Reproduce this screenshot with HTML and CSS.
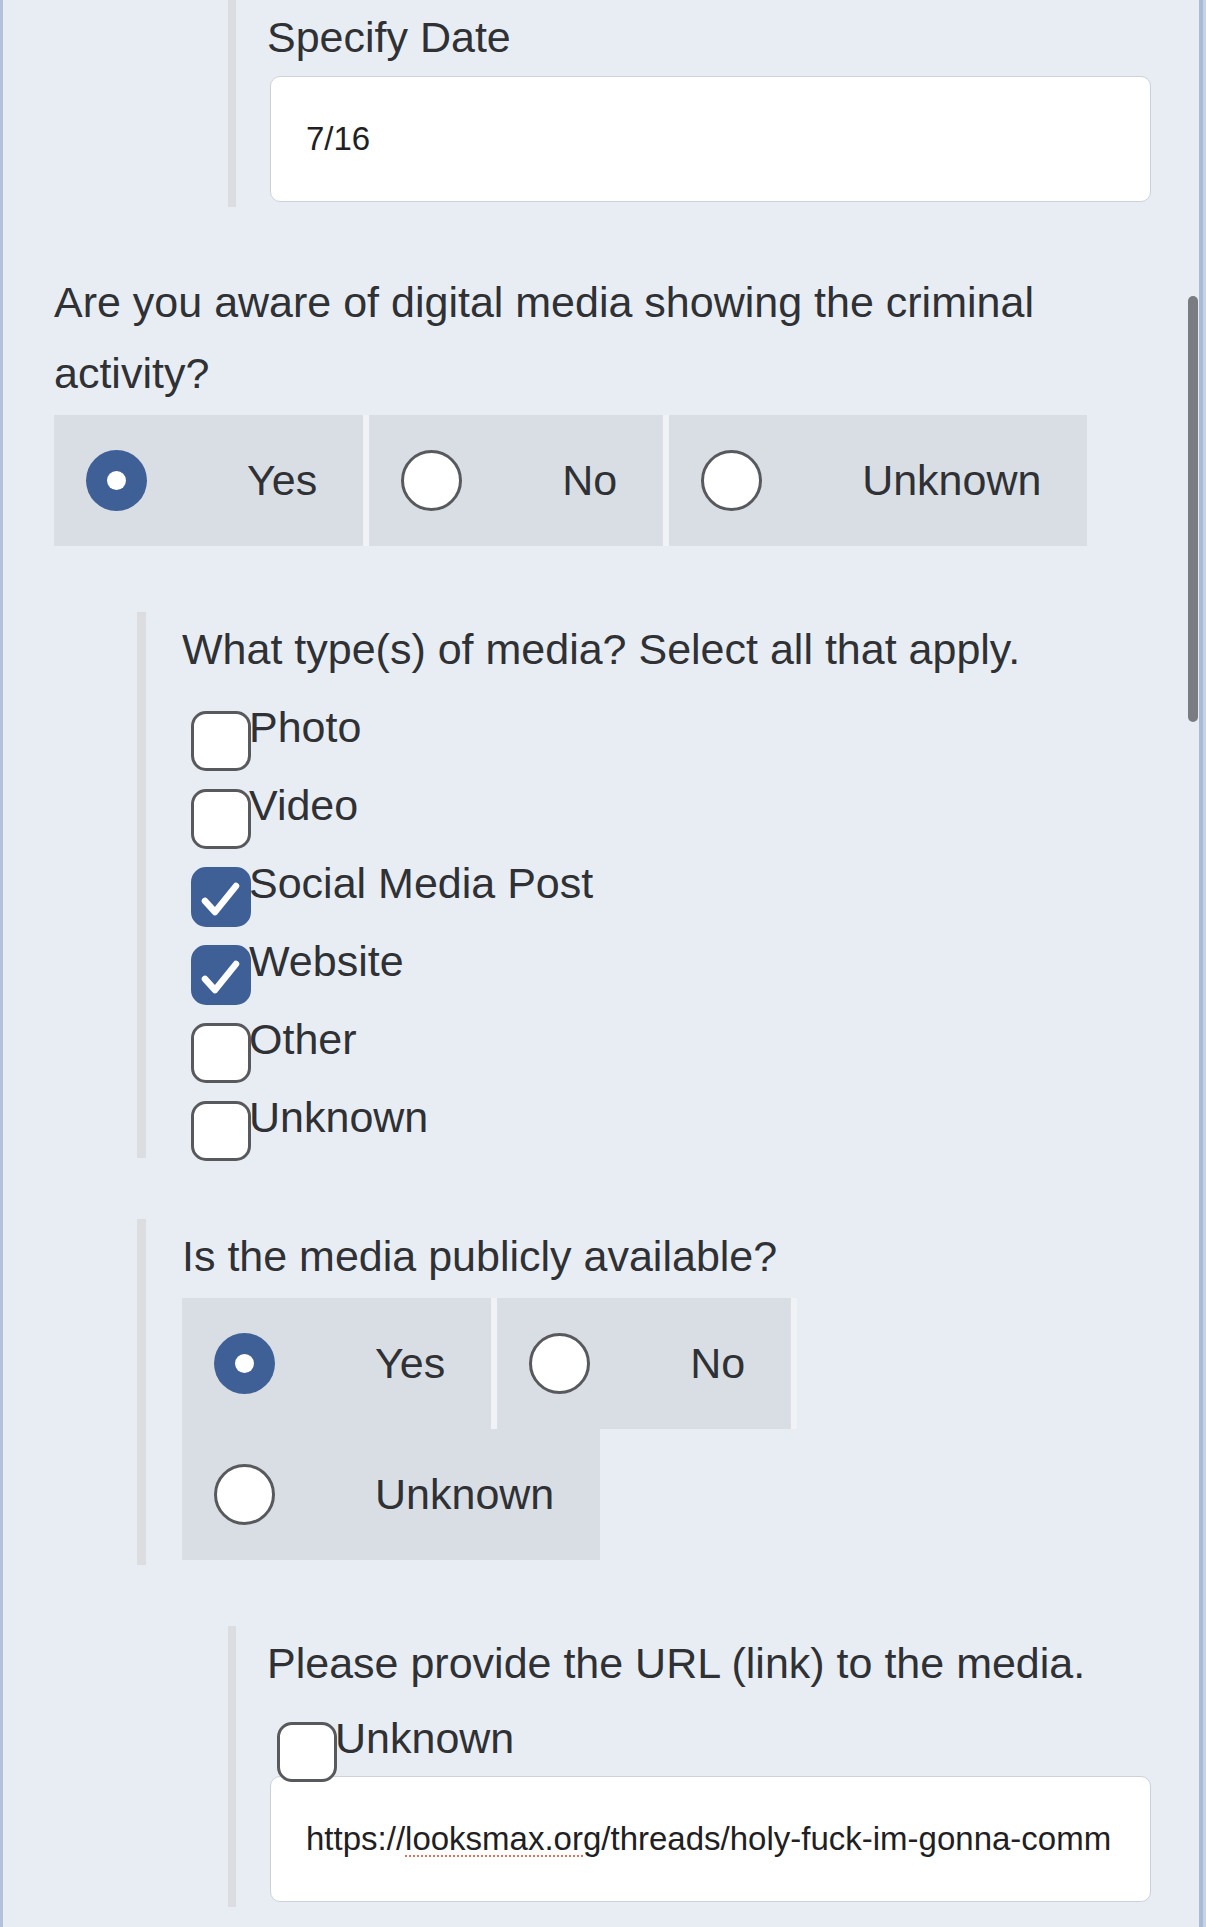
FILE: index.html
```html
<!DOCTYPE html>
<html lang="en">
<head>
    <meta charset="UTF-8">
    <meta name="viewport" content="width=device-width, initial-scale=1.0">
    <title>Report Form - Digital Media</title>
    <link rel="stylesheet" href="styles.css">
</head>
<body>
    <main class="page">
        <!-- follow-up of the previous question -->
        <section class="follow-up level-2">
            <label class="question" for="incidentDate">Specify Date</label>
            <input type="text" id="incidentDate" class="text-field" value="7/16">
        </section>

        <div class="question-block">
            <p class="question">Are you aware of digital media showing the criminal activity?</p>
            <div class="choice-group">
                <label class="choice"><span class="radio checked"></span><span>Yes</span></label>
                <label class="choice"><span class="radio"></span><span>No</span></label>
                <label class="choice"><span class="radio"></span><span>Unknown</span></label>
            </div>
        </div>

        <section class="follow-up level-1">
            <p class="question">What type(s) of media? Select all that apply.</p>
            <div class="check-list">
                <label class="check-option"><span class="checkbox"></span>Photo</label>
                <label class="check-option"><span class="checkbox"></span>Video</label>
                <label class="check-option">
                    <span class="checkbox checked">
                        <svg viewBox="0 0 60 60"><path d="M14 34 L24 45 L45 19"/></svg>
                    </span>Social Media Post
                </label>
                <label class="check-option">
                    <span class="checkbox checked">
                        <svg viewBox="0 0 60 60"><path d="M14 34 L24 45 L45 19"/></svg>
                    </span>Website
                </label>
                <label class="check-option"><span class="checkbox"></span>Other</label>
                <label class="check-option"><span class="checkbox"></span>Unknown</label>
            </div>
        </section>

        <section class="follow-up level-1">
            <p class="question">Is the media publicly available?</p>
            <div class="choice-group">
                <label class="choice"><span class="radio checked"></span><span>Yes</span></label>
                <label class="choice"><span class="radio"></span><span>No</span></label>
                <label class="choice"><span class="radio"></span><span>Unknown</span></label>
            </div>
        </section>

        <section class="follow-up level-2">
            <p class="question">Please provide the URL (link) to the media.</p>
            <label class="check-option single"><span class="checkbox"></span>Unknown</label>
            <div class="text-field url-field">https://<span class="misspelled">looksmax.org</span>/threads/holy-fuck-im-gonna-comm</div>
        </section>
    </main>
    <div class="scroll-thumb"></div>
</body>
</html>
```

FILE: styles.css
```css
body {
    margin: 0;
    background: #c6d2e6;
    font-family: 'Liberation Sans', Arial, Helvetica, sans-serif;
    color: #2f3135;
}
.page {
    box-sizing: border-box;
    width: 1203px;
    min-height: 100vh;
    padding: 0 48px 40px 51px;
    background: #e8edf4;
    border-left: 3px solid #b3c1db;
    border-right: 4px solid #aabbd6;
}
.question {
    display: block;
    margin: 0;
    font-size: 43px;
    line-height: 71px;
}
.question-block {
    margin-top: 60px;
    padding-bottom: 5px;
}
.follow-up {
    margin-top: 61px;
    padding: 2px 0 5px 31px;
    border-left: 8px solid #dcdde0;
}
.page > .follow-up:first-child {
    margin-top: 0;
}
.follow-up.level-1 {
    margin-left: 83px;
    padding-left: 36px;
    border-left-width: 9px;
}
.follow-up.level-2 {
    margin-left: 174px;
}

/* text inputs */
.text-field {
    display: block;
    box-sizing: border-box;
    width: calc(100% - 3px);
    height: 126px;
    margin: 3px 0 0 3px;
    padding: 0 36px 0 35px;
    border: 1.5px solid #cdd2da;
    border-radius: 10px;
    background: #fff;
    font-family: 'Liberation Sans', Arial, Helvetica, sans-serif;
    font-size: 33px;
    color: #1f2023;
    outline: none;
}
.url-field {
    display: flex;
    align-items: center;
    margin-top: 12px;
    white-space: nowrap;
    overflow: hidden;
}
.misspelled {
    text-decoration: underline dotted #e0715f;
    text-decoration-thickness: 2px;
    text-underline-offset: 5px;
}

/* radio buttons */
.choice-group {
    display: flex;
    flex-wrap: wrap;
    margin-top: 6px;
}
.choice {
    display: flex;
    align-items: center;
    box-sizing: border-box;
    height: 131px;
    padding: 0 46px 0 32px;
    background: #d9dee5;
    border-right: 6px solid #f0f2f5;
    font-size: 43px;
    line-height: 51px;
}
.choice:last-child {
    border-right: none;
}
.radio {
    flex-shrink: 0;
    box-sizing: border-box;
    width: 61px;
    height: 61px;
    margin-right: 100px;
    border: 3px solid #58595d;
    border-radius: 50%;
    background: #fff;
}
.radio.checked {
    display: flex;
    align-items: center;
    justify-content: center;
    border: none;
    background: #3f5f97;
}
.radio.checked::after {
    content: '';
    width: 19px;
    height: 19px;
    border-radius: 50%;
    background: #fff;
}

/* checkboxes */
.check-list {
    display: flex;
    flex-direction: column;
    gap: 27px;
    margin: 17px 0 10px 0;
}
.check-option {
    display: flex;
    align-items: flex-start;
    font-size: 43px;
    line-height: 51px;
}
.check-option.single {
    margin-top: 14px;
}
.checkbox {
    position: relative;
    z-index: 1;
    flex-shrink: 0;
    box-sizing: border-box;
    width: 60px;
    height: 60px;
    margin: 9px -2px -18px 9px;
    border: 3px solid #58595d;
    border-radius: 15px;
    background: #fff;
}
.check-option.single .checkbox {
    margin-left: 10px;
}
.checkbox.checked {
    border-color: #3f5f97;
    background: #3f5f97;
}
.checkbox svg {
    display: block;
    width: 60px;
    height: 60px;
    margin: -3px;
    fill: none;
    stroke: #fff;
    stroke-width: 6.5;
    stroke-linecap: round;
    stroke-linejoin: round;
}

.scroll-thumb {
    position: fixed;
    top: 296px;
    left: 1188px;
    width: 10px;
    height: 426px;
    border-radius: 5px;
    background: #797d82;
}
```
